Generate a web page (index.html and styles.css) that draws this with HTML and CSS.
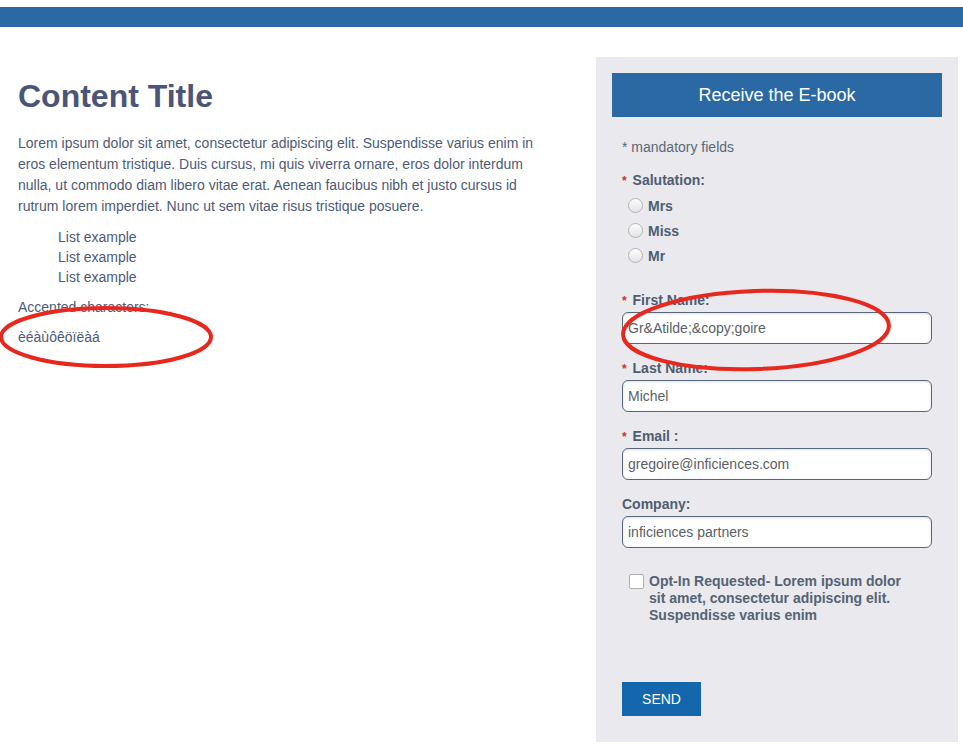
FILE: index.html
```html
<!DOCTYPE html>
<html lang="en">
<head>
  <meta charset="UTF-8" />
  <meta name="viewport" content="width=device-width, initial-scale=1.0" />
  <title>Receive the E-book</title>
  <link rel="stylesheet" href="styles.css">
</head>
<body>
  <div class="topbar"></div>

  <div class="page">
    <div class="content">
      <h1>Content Title</h1>
      <p class="intro">Lorem ipsum dolor sit amet, consectetur adipiscing elit. Suspendisse varius enim in eros elementum tristique. Duis cursus, mi quis viverra ornare, eros dolor interdum nulla, ut commodo diam libero vitae erat. Aenean faucibus nibh et justo cursus id rutrum lorem imperdiet. Nunc ut sem vitae risus tristique posuere.</p>
      <ul class="list">
        <li>List example</li>
        <li>List example</li>
        <li>List example</li>
      </ul>
      <p class="small">Accented characters:</p>
      <p class="small">èéàùôêöïëàá</p>
    </div>

    <aside class="panel">
      <div class="panel-title">Receive the E-book</div>
      <form class="form" onsubmit="return false">
        <p class="mandatory">* mandatory fields</p>

        <div class="label"><span class="req">*</span> Salutation:</div>
        <div class="radios">
          <label class="radio"><input type="radio" name="sal" /> Mrs</label>
          <label class="radio"><input type="radio" name="sal" /> Miss</label>
          <label class="radio"><input type="radio" name="sal" /> Mr</label>
        </div>

        <div class="field">
          <label class="label"><span class="req">*</span> First Name:</label>
          <input type="text" value="Gr&amp;Atilde;&amp;copy;goire" />
        </div>
        <div class="field">
          <label class="label"><span class="req">*</span> Last Name:</label>
          <input type="text" value="Michel" />
        </div>
        <div class="field">
          <label class="label"><span class="req">*</span> Email :</label>
          <input type="text" value="gregoire@inficiences.com" />
        </div>
        <div class="field">
          <label class="label">Company:</label>
          <input type="text" value="inficiences partners" />
        </div>

        <label class="optin">
          <input type="checkbox" />
          <span>Opt-In Requested- Lorem ipsum dolor sit amet, consectetur adipiscing elit. Suspendisse varius enim</span>
        </label>

        <button type="submit" class="send">SEND</button>
      </form>
    </aside>
  </div>

  <svg class="marks" width="963" height="754" viewBox="0 0 963 754">
    <ellipse cx="106" cy="337" rx="105" ry="29" />
    <ellipse cx="756" cy="330" rx="133" ry="39" transform="rotate(-2 756 330)" />
  </svg>
</body>
</html>
```

FILE: styles.css
```css
body {
  margin: 0;
  font-family: "Liberation Sans", Arial, sans-serif;
  color: #4e5a76;
  background: #fff;
}
.topbar {
  margin-top: 7px;
  height: 20px;
  background: #2a69a4;
}
.page {
  display: flex;
  padding-top: 30px;
}
.content {
  width: 538px;
  padding: 21px 40px 0 18px;
}
.content h1 {
  margin: 0;
  font-size: 32px;
  color: #4b5577;
}
.intro {
  margin: 18px 0 0;
  font-size: 14px;
  line-height: 21px;
}
.list {
  list-style: none;
  margin: 10px 0 0;
  padding-left: 40px;
  font-size: 14px;
  line-height: 20px;
}
.small {
  margin: 10px 0 0;
  font-size: 14px;
  line-height: 20px;
}
.panel {
  width: 330px;
  padding: 16px 16px 26px;
  background: #e9e9ee;
}
.panel-title {
  height: 44px;
  line-height: 44px;
  background: #2a69a4;
  color: #fff;
  text-align: center;
  font-size: 18px;
}
.form {
  padding: 0 10px;
}
.mandatory {
  margin: 21px 0 15px;
  font-size: 14px;
  line-height: 18px;
  color: #5a6878;
}
.label {
  display: block;
  font-size: 14px;
  line-height: 18px;
  font-weight: bold;
  color: #4f5d70;
}
.req {
  color: #c8322a;
  font-size: 12px;
  line-height: 12px;
  margin-right: 2px;
}
.radios {
  margin: 4px 0 23px 6px;
}
.radio {
  display: flex;
  align-items: center;
  height: 25px;
  font-size: 14px;
  font-weight: bold;
  color: #4f5d70;
}
.radio input {
  appearance: none;
  width: 15px;
  height: 15px;
  margin: 0 5px 0 0;
  border: 1px solid #b4b4b8;
  border-radius: 50%;
  background: linear-gradient(#fdfdfd, #e4e4e6);
}
.field {
  margin-bottom: 15px;
}
.field .label {
  margin-bottom: 3px;
}
.field input {
  display: block;
  box-sizing: border-box;
  width: 100%;
  height: 32px;
  margin: 0;
  padding: 0 5px;
  border: 1px solid #56677b;
  border-radius: 6px;
  box-shadow: inset 0 1px 3px rgba(0,0,0,0.12);
  font-family: inherit;
  font-size: 14px;
  color: #5a5f66;
  background: #fff;
}
.optin {
  display: flex;
  align-items: flex-start;
  margin: 25px 0 0 7px;
  font-size: 14px;
  line-height: 17px;
  font-weight: bold;
  color: #556374;
}
.optin input {
  appearance: none;
  flex: none;
  width: 15px;
  height: 15px;
  margin: 1px 5px 0 0;
  border: 1px solid #b0b0b4;
  border-radius: 2px;
  background: #fff;
}
.optin span {
  width: 272px;
}
.send {
  margin-top: 58px;
  width: 79px;
  height: 34px;
  border: none;
  background: #1466ad;
  color: #fff;
  font-family: inherit;
  font-size: 14px;
  cursor: pointer;
}
.marks {
  position: absolute;
  top: 0;
  left: 0;
  pointer-events: none;
}
.marks ellipse {
  fill: none;
  stroke: #e8281e;
  stroke-width: 4;
}
```
